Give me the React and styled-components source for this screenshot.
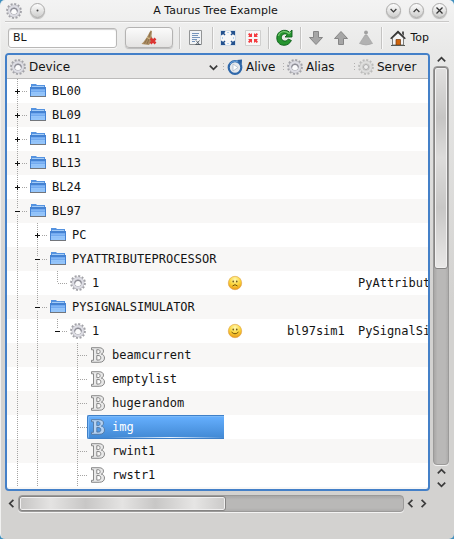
import React, { useState } from "react";
import styled, { createGlobalStyle } from "styled-components";

const Global = createGlobalStyle`
  * { box-sizing: border-box; }
  body { margin: 0; background: #3f8fbe; }
  button, input { font: inherit; color: inherit; }
`;

const Window = styled.main`
  height: 100vh;
  display: flex;
  flex-direction: column;
  padding: 0 5px 26px 4px;
  border-left: 1px solid #f1f1f0;
  border-radius: 5px;
  overflow: hidden;
  background: linear-gradient(#f3f3f3 0, #e9e9e8 50px, #d3d2d0 300px);
  color: #141414;
  font: 11px/16px "DejaVu Sans", sans-serif;
`;

const TitleBar = styled.header`
  flex: none;
  display: flex;
  align-items: center;
  height: 22px;
  padding: 0 2px 0 1px;
  border-bottom: 1px solid #c9c8c7;
  box-shadow: 0 1px #f8f8f8;
`;

const TitleGroup = styled.div`
  display: flex;
  align-items: center;
  gap: 8px;
  flex: none;
`;

const Title = styled.h1`
  flex: 1;
  margin: 0;
  font: inherit;
  text-align: center;
  white-space: nowrap;
`;

const RoundButton = styled.button`
  width: 15px;
  height: 15px;
  padding: 0;
  display: grid;
  place-items: center;
  border: 1px solid #aaa9a8;
  border-radius: 50%;
  background: linear-gradient(#fcfcfc, #cfcfce);
  box-shadow: 0 1px 1px #b5b5b4;
`;

const Toolbar = styled.div`
  flex: none;
  display: flex;
  align-items: center;
  height: 31px;
  padding: 0 12px 0 3px;
`;

const Filter = styled.input`
  flex: 1;
  min-width: 40px;
  height: 20px;
  padding: 0 4px;
  border: 1px solid #b9b8b7;
  border-radius: 3px;
  background: #fff;
  box-shadow: inset 0 1px 1px #d2d2d2, 0 1px #fafafa;
  outline: 0;
`;

const ClearButton = styled.button`
  width: 48px;
  height: 21px;
  margin: 0 6px 0 8px;
  padding: 0;
  display: grid;
  place-items: center;
  border: 1px solid #b4b3b2;
  border-radius: 4px;
  background: linear-gradient(#fbfbfb, #e4e3e2);
  box-shadow: 0 1px 1px #bbb;
`;

const ToolGroup = styled.div`
  flex: none;
  display: flex;
  align-items: center;
  gap: 9px;
  height: 22px;
  padding: 0 ${(p) => p.$pad ?? 7}px;
  border-left: 1px solid #c4c3c2;
  box-shadow: inset 1px 0 #f8f8f8;
`;

const ToolButton = styled.button`
  flex: none;
  display: flex;
  align-items: center;
  gap: 4px;
  height: 22px;
  padding: 0;
  border: 0;
  background: none;
`;

const Content = styled.section`
  flex: 1;
  min-height: 0;
  display: grid;
  grid-template-columns: minmax(0, 1fr) 19px;
  grid-template-rows: minmax(0, 1fr) 22px;
`;

const Viewport = styled.div`
  overflow: hidden;
  border: 2px solid #4480c8;
  border-radius: 4px;
  background: repeating-linear-gradient(#fff 0 24px, #f8f7f6 24px 48px) 0 24px;
`;

const Tree = styled.table`
  width: 100%;
  table-layout: fixed;
  border-collapse: collapse;
  font-family: "DejaVu Sans Mono", monospace;
`;

const Column = styled.col`
  width: ${(p) => p.$width}px;
`;

const HeaderCell = styled.th`
  height: 24px;
  padding: 0;
  background: #e8e7e6;
  box-shadow: inset 0 -1px #bcbbba;
  font: 12px/16px "DejaVu Sans", sans-serif;
  text-align: left;
`;

const HeaderLabel = styled.div`
  display: flex;
  align-items: center;
  gap: 3px;
  height: 24px;
  padding: 0 0 0 3px;
`;

const SortSlot = styled.span`
  display: flex;
  margin-left: auto;
  padding-right: 2px;
`;

const Grip = styled.span`
  width: 1px;
  height: 9px;
  margin-left: ${(p) => (p.$after ? 0 : "auto")};
  background: repeating-linear-gradient(#b2b1b0 0 1px, transparent 1px 3px);
`;

const Row = styled.tr`
  height: 24px;
  background: ${(p) => (p.$odd ? "#f8f7f6" : "#fff")};
`;

const Cell = styled.td`
  height: 24px;
  padding: 0 0 0 ${(p) => p.$pad ?? 3}px;
  overflow: hidden;
  white-space: nowrap;
  font-size: 12px;
`;

const Branch = styled.div`
  display: flex;
  align-items: center;
  height: 24px;
`;

const Node = styled.div`
  flex: 1;
  min-width: 0;
  display: flex;
  align-items: center;
  gap: 6px;
  height: 24px;
  padding-left: 2px;
  border: 1px solid transparent;
  border-right: 0;
  border-radius: 2px 0 0 2px;
  ${(p) =>
    p.$selected &&
    `
    color: #fff;
    border-color: #3f80c8;
    background: linear-gradient(to right, transparent 15%, #e4f1ff 60%, transparent) bottom / 100% 1px no-repeat,
      linear-gradient(#66b0ff, #4289d4);
    box-shadow: inset 1px 1px #7dbaf8;
  `}
`;

const Expander = styled.button`
  flex: none;
  display: block;
  width: 19px;
  height: 24px;
  padding: 0;
  border: 0;
  background: none;
`;

const Line = styled.svg`
  flex: none;
  display: block;
  shape-rendering: crispEdges;
`;

const Bar = styled.div`
  display: flex;
  align-items: center;
  flex-direction: ${(p) => (p.$vertical ? "column" : "row")};
  padding: ${(p) => (p.$vertical ? "0 0 0 3px" : "2px 0 0 0")};
`;

const Track = styled.div`
  flex: 1;
  display: flex;
  flex-direction: ${(p) => (p.$vertical ? "column" : "row")};
  width: ${(p) => (p.$vertical ? "16px" : "auto")};
  height: ${(p) => (p.$vertical ? "auto" : "17px")};
  border: 1px solid #9b9a99;
  border-radius: 4px;
  background: linear-gradient(${(p) => (p.$vertical ? "to right" : "to bottom")}, #a8a7a6, #b9b8b7 25%, #b9b8b7 80%, #adacab);
  box-shadow: 0 1px #f3f3f2;
`;

const Thumb = styled.div`
  flex: 0 0 ${(p) => p.$share}%;
  border: 1px solid #858483;
  border-radius: 3px;
  box-shadow: inset 0 0 0 1px #f1f0f0;
  background: ${(p) =>
    p.$vertical
      ? "linear-gradient(#e1e0df, #c6c5c4 25%, #dddcdb 45%, #c8c7c6 70%, #e9e8e7)"
      : "linear-gradient(to right, #c6c5c4, #e4e3e2 15%, #c8c7c6 32%, #e4e3e2 50%, #c8c7c6 66%, #e6e5e4 85%, #cbcac9)"};
`;

const ArrowButton = styled.button`
  flex: none;
  width: 13px;
  height: 13px;
  padding: 0;
  display: grid;
  place-items: center;
  border: 0;
  background: none;
`;

function Chevron({ turn = 0, size = 9 }) {
  return (
    <svg width={size} height={size} viewBox="0 0 9 9" fill="none" stroke="#3b3b3b" strokeWidth="1.7">
      <path d="M.8 2.6 4.5 6.3 8.2 2.6" transform={`rotate(${turn} 4.5 4.5)`} />
    </svg>
  );
}

function Gear({ pale }) {
  const edge = pale ? "#bcbcbb" : "#a3a3a9";
  return (
    <svg width="16" height="16" viewBox="0 0 16 16" fill="none">
      <circle cx="8" cy="8" r="6.9" stroke={edge} strokeWidth="2" strokeDasharray="2 1.613" />
      <circle cx="8" cy="8" r="4.6" stroke={edge} strokeWidth="3.4" />
      <circle cx="8" cy="8" r="4.8" stroke={pale ? "#dededd" : "#dcdce3"} strokeWidth="2.4" />
      {pale && <circle cx="8" cy="8" r="2.5" fill="#eee" stroke="#aaa" />}
      {!pale && (
        <>
          <circle cx="8" cy="8" r="3" fill="#fbfbfc" />
          <path d="M4.8 8.500a3.200 3.200 0 1 1 6.400 0" stroke="#8d8d96" strokeWidth="1.200" />
        </>
      )}
    </svg>
  );
}

function Folder() {
  return (
    <svg width="16" height="16" viewBox="0 0 16 16">
      <path d="M1 4V1h5l1 1h8v3H1z" fill="#5593e0" />
      <path d="M2 3h12v2H2z" fill="#a5cdf7" />
      <path d="M0 4h16v9H0z" fill="#4583d3" />
      <path d="M1 6h14v6H1z" fill="#72aaf0" />
      <path d="M1 9h14v4H1z" fill="#95c5fa" />
      <path d="M1 7.5h14M1 10.5h14" stroke="#8dbdf6" strokeWidth=".6" />
      <path d="M0 13h16v1H0z" fill="#73767b" />
    </svg>
  );
}

function Attribute({ selected }) {
  return (
    <svg width="16" height="16" viewBox="0 0 16 16">
      <path
        fillRule="evenodd"
        d="M1.5.7H9c3 0 4.5 1.4 4.5 3.4 0 1.6-.8 2.5-2.2 3 2 .5 3.2 1.8 3.2 3.9 0 2.8-2 4.3-5.2 4.3H1.5v-2h2V2.8h-2zm5.3 2v3.9h1.1c1.5 0 2.2-.7 2.2-2s-.7-1.9-2.2-1.900zm0 5.8v4.6h1.3c1.8 0 2.700-.7 2.700-2.300S9.900 8.500 8 8.500z"
        fill={selected ? "#b5d2f2" : "#e9e9e9"}
        stroke={selected ? "#55779f" : "#7d7d7d"}
        strokeWidth=".9"
      />
    </svg>
  );
}

function Face({ happy }) {
  return (
    <svg width="16" height="16" viewBox="0 0 16 16" role="img" aria-label={happy ? "alive" : "not alive"}>
      <defs>
        <radialGradient id={happy ? "happy" : "sad"} cx=".5" cy=".25" r=".75">
          <stop offset="0" stopColor="#fff7b0" />
          <stop offset=".55" stopColor="#fbd437" />
          <stop offset="1" stopColor="#e9961a" />
        </radialGradient>
      </defs>
      <circle cx="8" cy="8" r="6.700" fill={`url(#${happy ? "happy" : "sad"})`} stroke="#dda044" strokeWidth=".6" />
      <ellipse cx="6.200" cy="6.500" rx=".7" ry="1.100" fill="#58430f" />
      <ellipse cx="9.800" cy="6.500" rx=".7" ry="1.100" fill="#58430f" />
      <path d={happy ? "M4.500 9q3.500 3.600 7 0" : "M5.500 11q2.500-2.600 5 0"} fill="none" stroke="#73510c" />
    </svg>
  );
}

function AliveIcon() {
  return (
    <svg width="16" height="16" viewBox="0 0 16 16">
      <circle cx="8" cy="8.500" r="6.300" fill="#e5e8ec" stroke="#2f68aa" strokeWidth="2.200" />
      <path d="M3 5a6 6 0 0 1 8-2" fill="none" stroke="#6aa3dc" />
      <path d="m10 1 5-.5-.3 5z" fill="#2a5f9f" />
      <path d="m6 5 5 3.500L6 12z" fill="#fff" stroke="#a8b6c6" strokeWidth=".7" />
    </svg>
  );
}

function Broom() {
  return (
    <svg width="16" height="16" viewBox="0 0 16 16">
      <path d="M9.500.5 11 1l-.5 5 1.500 3.500L8 15 .5 14l2-2L6 7z" fill="#ab8d62" />
      <path d="m6.500 8-3 5.500M8 9l-2 5M9.500 2 8 7" stroke="#80633f" fill="none" strokeWidth=".7" />
      <path d="m6 7.500 4 2" stroke="#d7bd87" />
      <path d="m9.500 8.500 5 5m0-5-5 5" stroke="#dc3533" strokeWidth="2.600" />
    </svg>
  );
}

function PageIcon() {
  return (
    <svg width="14" height="16" viewBox="0 0 14 16" fill="none">
      <path d="M.5.500h12v14H.500z" fill="#f2f4f6" stroke="#929495" />
      <path d="M3 3.500h7M3 5.500h6M3 7.500h8M3 9.500h5M3 11.500h3" stroke="#7594bb" />
      <path d="m7 10.500 3.500 4m0-4-3.500 4M6.500 14.500h5" stroke="#4c5660" strokeWidth=".9" />
    </svg>
  );
}

function Corners({ inward }) {
  const corner = inward ? "M7 3v4H3l1.300-1.300L3 4.300 4.300 3l1.400 1.300z" : "M1 1h4.500L4.300 3.200 5.500 4.600 4.600 5.500 3.200 4.300 1 5.500z";
  return (
    <svg width="16" height="16" viewBox="0 0 16 16">
      <path d="M.5.500h15v15H.500z" fill="#f7f7f7" stroke={inward ? "#cfcfce" : "#d3dce5"} />
      {[0, 90, 180, 270].map((turn) => (
        <path key={turn} d={corner} fill={inward ? "#f43a3e" : "#24528f"} transform={`rotate(${turn} 8 8)`} />
      ))}
      {!inward && <path d="M7 2.500h2M7 13.500h2M2.500 7v2M13.500 7v2" stroke="#b4d0ec" />}
    </svg>
  );
}

function Refresh() {
  return (
    <svg width="17" height="17" viewBox="0 0 17 17">
      <path
        d="M16 1v7H9l2.300-2.300C9.300 4 5.500 5 5.400 8.500c-.1 3.700 4.600 5 7 1.500l3 1.500C13.500 15 11 16.300 8 16.300 3.500 16.300.8 13 .8 8.800.8 2 9 -1 13.600 3.300z"
        fill="#26942f"
        stroke="#0b5d18"
        strokeWidth=".9"
      />
      <path d="M2.500 7C3.300 2.500 9.500 1 13 4.500L14.800 3" fill="none" stroke="#79c873" strokeWidth="1.200" />
    </svg>
  );
}

function BlockArrow({ up }) {
  return (
    <svg width="16" height="16" viewBox="0 0 16 16">
      <path
        d="M5.500 1.500h5v6h4L8 14.500 1.500 7.500h4z"
        transform={up ? "rotate(180 8 8)" : undefined}
        fill="#a6a6a6"
        stroke="#868686"
      />
    </svg>
  );
}

function Cone() {
  return (
    <svg width="16" height="16" viewBox="0 0 16 16" fill="#b2b2b2">
      <circle cx="8" cy="2.500" r="1.900" fill="#a0a0a0" />
      <path d="M7 5h2l5.500 8.500Q8 16.500 1.500 13.500z" stroke="#a0a0a0" strokeWidth=".6" />
    </svg>
  );
}

function Home() {
  return (
    <svg width="16" height="16" viewBox="0 0 16 16">
      <path d="M2.500 8 8 3l5.500 5v7h-11z" fill="#f4f4f4" stroke="#7c7d7a" />
      <path d="M12 1.500h2V6l-2-2z" fill="#555" />
      <path d="M.7 8.700 8 1.600l7.300 7.100" fill="none" stroke="#333" strokeWidth="1.500" />
      <path d="M6 9.500h4.500V15H6z" fill="#cf640b" stroke="#713b12" strokeWidth=".7" />
      <path d="M1 15.500h14" stroke="#565852" />
    </svg>
  );
}

function Guide({ through }) {
  return (
    <Line width="20" height="24">
      {through && <path d="M9.500 0v24" stroke="#a5a4a3" strokeDasharray="1 1" />}
    </Line>
  );
}

function Joint({ open, above = true, below, name, onToggle }) {
  const sign = open !== undefined;
  const drawing = (
    <Line width="19" height="24">
      {above && <path d={sign ? "M9.500 0v9" : "M9.500 0v12"} stroke="#a5a4a3" strokeDasharray="1 1" />}
      {below && <path d={sign ? "M9.500 16v8" : "M9.500 12v12"} stroke="#a5a4a3" strokeDasharray="1 1" />}
      <path d={sign ? "M14 12.500h5" : "M10 12.500h9"} stroke="#a5a4a3" strokeDasharray="1 1" />
      {sign && <path d={open ? "M7 12.500h5" : "M7 12.500h5M9.500 10v5"} stroke="#111" />}
    </Line>
  );
  if (!sign) return drawing;
  return (
    <Expander aria-label={name} aria-expanded={open} onClick={onToggle}>
      {drawing}
    </Expander>
  );
}

const rows = [
  { name: "BL00", kind: "folder", lines: [], open: false, below: true },
  { name: "BL09", kind: "folder", lines: [], open: false, below: true },
  { name: "BL11", kind: "folder", lines: [], open: false, below: true },
  { name: "BL13", kind: "folder", lines: [], open: false, below: true },
  { name: "BL24", kind: "folder", lines: [], open: false, below: true },
  { name: "BL97", kind: "folder", lines: [], open: true, below: true },
  { name: "PC", kind: "folder", lines: [true], open: false, below: true },
  { name: "PYATTRIBUTEPROCESSOR", kind: "folder", lines: [true], open: true, below: true },
  { name: "1", kind: "device", lines: [true, true], alive: false, server: "PyAttribute" },
  { name: "PYSIGNALSIMULATOR", kind: "folder", lines: [true], open: true, below: true },
  { name: "1", kind: "device", lines: [true, true], open: true, alive: true, alias: "bl97sim1", server: "PySignalSim" },
  ...["beamcurrent", "emptylist", "hugerandom", "img", "rwint1", "rwstr1"].map((name) => ({
    name,
    kind: "attribute",
    lines: [true, true, false],
    below: true,
  })),
];

function NodeIcon({ kind, selected }) {
  if (kind === "folder") return <Folder />;
  if (kind === "device") return <Gear />;
  return <Attribute selected={selected} />;
}

export default function App() {
  const [filter, setFilter] = useState("BL");
  const [selected, setSelected] = useState("img");
  return (
    <>
      <Global />
      <Window>
        <TitleBar>
          <TitleGroup>
            <Gear />
            <RoundButton aria-label="On all desktops">
              <svg width="3" height="3"><circle cx="1.500" cy="1.500" r="1" fill="#444" /></svg>
            </RoundButton>
          </TitleGroup>
          <Title>A Taurus Tree Example</Title>
          <TitleGroup>
            <RoundButton aria-label="Minimize"><Chevron size={7} /></RoundButton>
            <RoundButton aria-label="Maximize"><Chevron size={7} turn={180} /></RoundButton>
            <RoundButton aria-label="Close">
              <svg width="7" height="7" stroke="#333" strokeWidth="1.300"><path d="m.5.500 6 6m0-6-6 6" /></svg>
            </RoundButton>
          </TitleGroup>
        </TitleBar>
        <Toolbar>
          <Filter aria-label="Filter" value={filter} onChange={(e) => setFilter(e.target.value)} />
          <ClearButton aria-label="Clear filter" onClick={() => setFilter("")}><Broom /></ClearButton>
          <ToolGroup $pad={9}>
            <ToolButton aria-label="Select columns"><PageIcon /></ToolButton>
          </ToolGroup>
          <ToolGroup>
            <ToolButton aria-label="Expand all"><Corners /></ToolButton>
            <ToolButton aria-label="Collapse all"><Corners inward /></ToolButton>
          </ToolGroup>
          <ToolGroup>
            <ToolButton aria-label="Refresh"><Refresh /></ToolButton>
          </ToolGroup>
          <ToolGroup>
            <ToolButton aria-label="Go into"><BlockArrow /></ToolButton>
            <ToolButton aria-label="Go up"><BlockArrow up /></ToolButton>
            <ToolButton aria-label="Go to top level"><Cone /></ToolButton>
          </ToolGroup>
          <ToolGroup $pad={8}>
            <ToolButton><Home />Top</ToolButton>
          </ToolGroup>
        </Toolbar>
        <Content>
          <Viewport>
            <Tree>
              <colgroup>
                <Column $width={217} />
                <Column $width={60} />
                <Column $width={71} />
                <col />
              </colgroup>
              <thead>
                <tr>
                  <HeaderCell>
                    <HeaderLabel><Gear />Device<SortSlot><Chevron /></SortSlot><Grip $after /></HeaderLabel>
                  </HeaderCell>
                  <HeaderCell><HeaderLabel><AliveIcon />Alive<Grip /></HeaderLabel></HeaderCell>
                  <HeaderCell><HeaderLabel><Gear />Alias<Grip /></HeaderLabel></HeaderCell>
                  <HeaderCell><HeaderLabel><Gear pale />Server</HeaderLabel></HeaderCell>
                </tr>
              </thead>
              <tbody>
                {rows.map((row, i) => {
                  const isSelected = row.name === selected;
                  return (
                    <Row key={i} $odd={i % 2 === 1} onClick={() => setSelected(row.name)}>
                      <Cell $pad={1}>
                        <Branch>
                          {row.lines.map((through, n) => <Guide key={n} through={through} />)}
                          <Joint open={row.open} below={row.below} name={`Toggle ${row.name}`} />
                          <Node $selected={isSelected}>
                            <NodeIcon kind={row.kind} selected={isSelected} />
                            {row.name}
                          </Node>
                        </Branch>
                      </Cell>
                      <Cell>{row.alive !== undefined && <Branch><Face happy={row.alive} /></Branch>}</Cell>
                      <Cell>{row.alias}</Cell>
                      <Cell>{row.server}</Cell>
                    </Row>
                  );
                })}
              </tbody>
            </Tree>
          </Viewport>
          <Bar $vertical>
            <ArrowButton aria-label="Scroll up"><Chevron turn={180} /></ArrowButton>
            <Track $vertical><Thumb $vertical $share={51} role="scrollbar" aria-orientation="vertical" aria-valuenow={0} /></Track>
            <ArrowButton aria-label="Page up"><Chevron turn={180} /></ArrowButton>
            <ArrowButton aria-label="Scroll down"><Chevron /></ArrowButton>
          </Bar>
          <Bar>
            <ArrowButton aria-label="Scroll left"><Chevron turn={90} /></ArrowButton>
            <Track><Thumb $share={54} role="scrollbar" aria-orientation="horizontal" aria-valuenow={0} /></Track>
            <ArrowButton aria-label="Page left"><Chevron turn={90} /></ArrowButton>
            <ArrowButton aria-label="Scroll right"><Chevron turn={270} /></ArrowButton>
          </Bar>
        </Content>
      </Window>
    </>
  );
}
